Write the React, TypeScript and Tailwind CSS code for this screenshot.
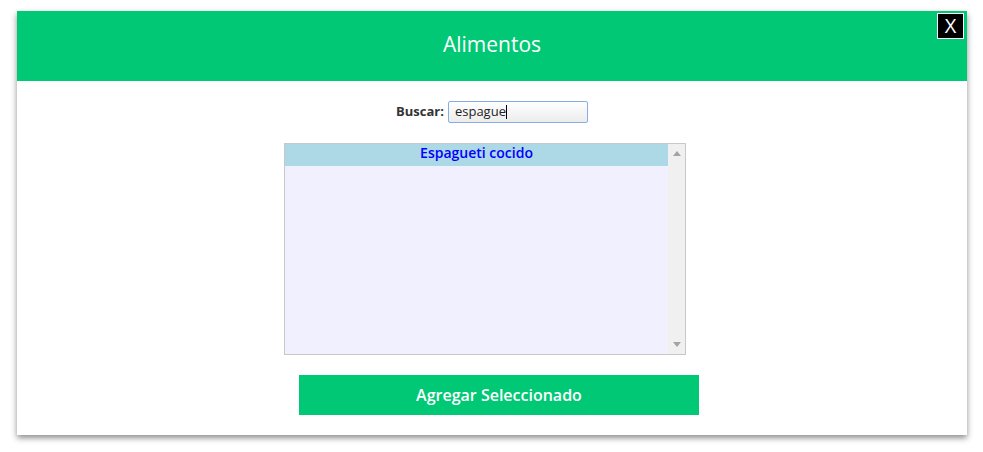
const font = { fontFamily: '"Open Sans", "Noto Sans", sans-serif' };

export default function App() {
  return (
    <div className="w-[983px] h-[452px] bg-white pt-[11px] pl-[17px]" style={font}>
      <div className="relative w-[950px] h-[424px] bg-white shadow-[0_3px_6px_rgba(0,0,0,0.45)] flex flex-col">
        {/* Header */}
        <div className="h-[70px] bg-[#00c875] flex items-center justify-center pb-[4px]">
          <h1 className="text-white text-[21px] leading-none">Alimentos</h1>
        </div>
        <button className="absolute top-[2px] right-[3px] w-[27px] h-[26px] bg-black border border-white text-white text-[20px] leading-none flex items-center justify-center">
          X
        </button>

        {/* Body */}
        <div className="flex flex-col pt-[20px]">
          <div className="flex items-center justify-center gap-[4px] h-[22px]">
            <label className="text-[13px] font-bold text-[#333]">Buscar:</label>
            <div className="w-[140px] h-[22px] border border-[#86aee6] rounded-[2px] bg-gradient-to-b from-white to-[#ececec] flex items-center pl-[6px] text-[13px] text-[#222]">
              espague<span className="w-px h-[14px] bg-black" />
            </div>
          </div>

          <div className="mt-[20px] ml-[267px] w-[402px] h-[212px] border border-[#c8c8c8] bg-[#f0f0ff] flex">
            <div className="flex-1">
              <div className="h-[22px] bg-[#add8e6] text-center leading-[17px] text-[14px] font-semibold text-[#0000ff]">
                Espagueti cocido
              </div>
            </div>
            <div className="w-[17px] bg-[#f0f0f0] flex flex-col items-center justify-between py-[7px]">
              <svg width="8" height="5" viewBox="0 0 8 5"><path d="M0 5 L4 0 L8 5 Z" fill="#a3a3a3" /></svg>
              <svg width="8" height="5" viewBox="0 0 8 5"><path d="M0 0 L8 0 L4 5 Z" fill="#a3a3a3" /></svg>
            </div>
          </div>

          <button className="mt-[20px] ml-[282px] w-[400px] h-[40px] bg-[#00c875] text-white text-[16px] font-semibold">
            Agregar Seleccionado
          </button>
        </div>
      </div>
    </div>
  );
}
